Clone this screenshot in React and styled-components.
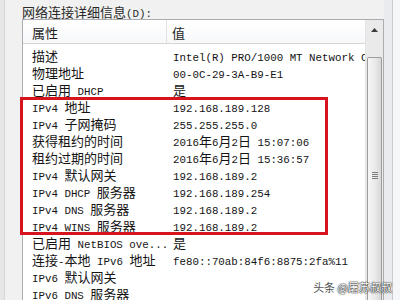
import React from 'react';
import styled, { createGlobalStyle } from 'styled-components';

const Global = createGlobalStyle`
  html, body { margin: 0; padding: 0; }
  body {
    width: 400px; height: 300px; overflow: hidden;
    background: #f1f1f1;
    font-family: "Noto Sans CJK SC", "Noto Sans", sans-serif;
    color: #141414;
  }
`;

const Window = styled.div`
  position: relative;
  display: flex;
  width: 400px;
  height: 300px;
  overflow: hidden;
  background: #f1f1f1;
`;

const LeftEdge = styled.div`
  flex: none;
  width: 4px;
  background: #e6e6e6;
  border-right: 1px solid #d6d6d6;
`;

const Main = styled.div`
  flex: 1;
  min-width: 0;
  display: flex;
  flex-direction: column;
  padding-left: 17px;
`;

const RightGap = styled.div`
  flex: none;
  width: 8px;
  background: #e9ebee;
`;

const RightEdge = styled.div`
  flex: none;
  width: 7px;
  background: #f5f6f8;
  border-left: 1px solid #c8ccd1;
`;

const Label = styled.div`
  flex: none;
  height: 19px;
  box-sizing: border-box;
  padding-top: 4px;
  line-height: 15px;
  font-size: 13px;
  color: #2a2a2a;
  white-space: pre;
`;

const Latin = styled.span`
  font-family: "Liberation Mono", monospace;
  font-size: 10.8px;
`;

const ListBox = styled.div`
  flex: 1;
  display: flex;
  border: 1px solid #abadb3;
  border-bottom: none;
  background: #ffffff;
  min-height: 0;
`;

const Content = styled.div`
  flex: 1;
  min-width: 0;
  display: flex;
  flex-direction: column;
`;

const Columns = styled.div`
  display: grid;
  grid-template-columns: 144px minmax(0, 1fr);
`;

const Header = styled(Columns)`
  height: 23px;
  border-bottom: 1px solid #d5d5d5;
  background: linear-gradient(#ffffff, #f7f8fa);
`;

const HeadCell = styled.div`
  padding: 3px 0 0 ${p => p.$pad}px;
  line-height: 20px;
  font-size: 13px;
  color: #1e1e1e;
  border-right: ${p => (p.$divider ? '1px solid #e2e3e5' : 'none')};
`;

const Body = styled.div`
  padding-top: 3px;
  display: flex;
  flex-direction: column;
`;

const Row = styled(Columns)`
  height: 17px;
  line-height: 17px;
  font-size: 13px;
`;

const Cell = styled.div`
  padding-left: ${p => p.$pad}px;
  white-space: pre;
  overflow: hidden;
`;

const Highlight = styled.div`
  position: relative;
  display: flex;
  flex-direction: column;
  &::after {
    content: '';
    position: absolute;
    left: -3px;
    top: -1px;
    width: 308px;
    bottom: -1px;
    box-sizing: border-box;
    border: 3px solid #d7141d;
    pointer-events: none;
  }
`;

const ScrollBar = styled.div`
  flex: none;
  width: 17px;
  display: flex;
  flex-direction: column;
  align-items: center;
  background: #eaeaea;
  border-left: 1px solid #e4e4e4;
`;

const ArrowBtn = styled.div`
  height: 17px;
  width: 17px;
  display: flex;
  align-items: center;
  justify-content: center;
  padding-top: 2px;
  box-sizing: border-box;
`;

const Thumb = styled.div`
  margin-top: 20px;
  width: 15px;
  flex: 1;
  box-sizing: border-box;
  border: 1px solid #9c9c9c;
  border-bottom: none;
  border-radius: 2px 2px 0 0;
  background: linear-gradient(90deg, #f6f6f6 0%, #ebebeb 50%, #d8d8d8 100%);
  display: flex;
  justify-content: center;
  padding-top: 114px;
`;

const Grip = styled.div`
  width: 6px;
  height: 7px;
  background: repeating-linear-gradient(#7e7e7e 0 1px, transparent 1px 2px);
`;

const Watermark = styled.div`
  position: absolute;
  right: 8px;
  bottom: 6px;
  font-size: 11px;
  line-height: 13px;
  white-space: pre;
  color: #555;
`;

const Handle = styled.span`
  color: #ffffff;
  text-shadow: 0 0 1px #222, 0 0 1px #222, 0 0 2px #444;
`;

const Txt = ({ children }) =>
  String(children)
    .split(/([\x20-\x7e]+)/)
    .filter(Boolean)
    .map((s, i) =>
      /^[\x20-\x7e]+$/.test(s) ? <Latin key={i}>{s}</Latin> : <React.Fragment key={i}>{s}</React.Fragment>
    );

const before = [
  ['描述', 'Intel(R) PRO/1000 MT Network Connection'],
  ['物理地址', '00-0C-29-3A-B9-E1'],
  ['已启用 DHCP', '是'],
];
const boxed = [
  ['IPv4 地址', '192.168.189.128'],
  ['IPv4 子网掩码', '255.255.255.0'],
  ['获得租约的时间', '2016年6月2日 15:07:06'],
  ['租约过期的时间', '2016年6月2日 15:36:57'],
  ['IPv4 默认网关', '192.168.189.2'],
  ['IPv4 DHCP 服务器', '192.168.189.254'],
  ['IPv4 DNS 服务器', '192.168.189.2'],
  ['IPv4 WINS 服务器', '192.168.189.2'],
];
const after = [
  ['已启用 NetBIOS ove...', '是'],
  ['连接-本地 IPv6 地址', 'fe80::70ab:84f6:8875:2fa%11'],
  ['IPv6 默认网关', ''],
  ['IPv6 DNS 服务器', ''],
];

const Rows = ({ items }) =>
  items.map(([k, v]) => (
    <Row key={k}>
      <Cell $pad={9}><Txt>{k}</Txt></Cell>
      <Cell $pad={6}><Txt>{v}</Txt></Cell>
    </Row>
  ));

export default function App() {
  return (
    <>
      <Global />
      <Window>
        <LeftEdge />
        <Main>
          <Label><Txt>网络连接详细信息(D):</Txt></Label>
          <ListBox>
            <Content>
              <Header>
                <HeadCell $pad={9} $divider>属性</HeadCell>
                <HeadCell $pad={5}>值</HeadCell>
              </Header>
              <Body>
                <Rows items={before} />
                <Highlight>
                  <Rows items={boxed} />
                </Highlight>
                <Rows items={after} />
              </Body>
            </Content>
            <ScrollBar>
              <ArrowBtn>
                <svg width="7" height="4" viewBox="0 0 7 4">
                  <path d="M0 4 L3.5 0 L7 4 Z" fill="#3c3c3c" />
                </svg>
              </ArrowBtn>
              <Thumb>
                <Grip />
              </Thumb>
            </ScrollBar>
          </ListBox>
        </Main>
        <RightGap />
        <RightEdge />
        <Watermark>
          头条 <Handle>@屠苏叔叔</Handle>
        </Watermark>
      </Window>
    </>
  );
}
